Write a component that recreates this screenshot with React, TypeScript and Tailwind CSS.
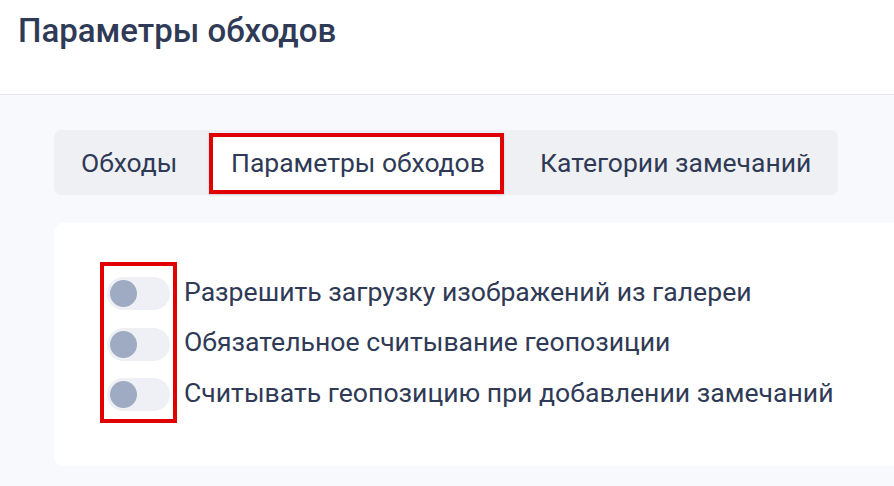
import React from "react";

const Toggle = () => (
  <div className="w-[63px] h-[33px] rounded-full bg-[#eff0f5] flex items-center pl-[3px] shrink-0">
    <div className="w-[27px] h-[27px] rounded-full bg-[#9eabc3]" />
  </div>
);

export default function App() {
  const rows = [
    "Разрешить загрузку изображений из галереи",
    "Обязательное считывание геопозиции",
    "Считывать геопозицию при добавлении замечаний",
  ];
  return (
    <div
      className="w-[894px] h-[486px] overflow-hidden bg-[#f8f9fc] text-[#2f3a56]"
      style={{ fontFamily: "Roboto, 'Noto Sans', sans-serif" }}
    >
      <header className="h-[95px] bg-white border-b border-[#e7e9ee] px-[18px] pt-[11px]">
        <h1 className="text-[33px] leading-[40px] font-medium text-[#2f3a56]">Параметры обходов</h1>
      </header>
      <main className="pl-[54px] pt-[35px]">
        <div className="flex w-[784px] h-[65px] rounded-[7px] bg-[#eff0f4] items-center text-[26.5px] whitespace-nowrap">
          <div className="w-[155px] pl-[27px]">Обходы</div>
          <div className="relative w-[295px] h-[61px] mt-[1px] bg-white flex items-center pl-[18px] border-[4px] border-[#e00000] shadow-[0_1px_2px_rgba(0,0,0,0.15)]">
            Параметры обходов
          </div>
          <div className="flex-1 pl-[36px]">Категории замечаний</div>
        </div>
        <div className="relative mt-[28px] w-[900px] h-[243px] rounded-[9px] bg-white pl-[53px] pt-[54px]">
          <div className="absolute left-[46px] top-[39px] w-[77px] h-[161px] border-[4px] border-[#e00000]" />
          <div className="flex flex-col gap-[17.5px]">
            {rows.map((r) => (
              <div key={r} className="flex items-center gap-[14px] h-[33px]">
                <Toggle />
                <span className="text-[26.6px] leading-none -mt-[3px] whitespace-nowrap">{r}</span>
              </div>
            ))}
          </div>
        </div>
      </main>
    </div>
  );
}
